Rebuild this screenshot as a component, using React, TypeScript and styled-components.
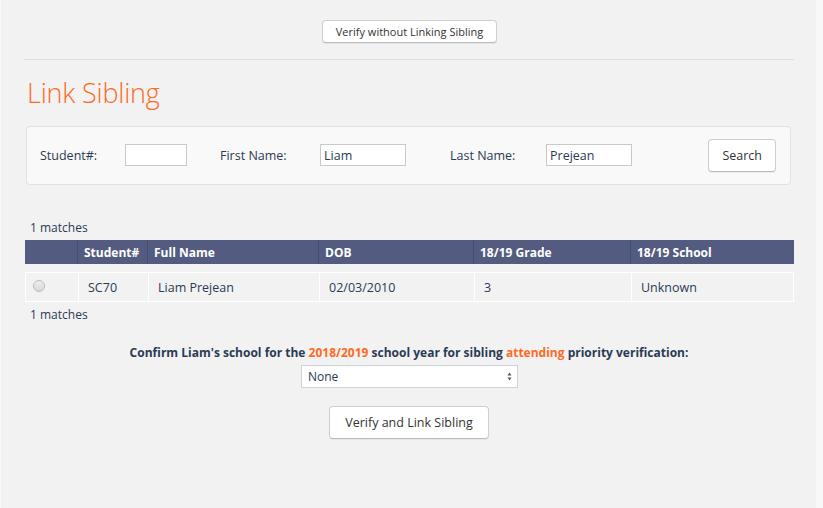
import React from 'react';
import styled, { createGlobalStyle } from 'styled-components';

const GlobalStyle = createGlobalStyle`
  html, body {
    margin: 0;
    padding: 0;
    background: #f8f8f8;
  }
  body {
    font-family: 'Open Sans', 'Liberation Sans', sans-serif;
    color: #2b3a55;
  }
`;

const Page = styled.div`
  margin-left: 1px;
  width: 815px;
  min-height: 508px;
  background: #f2f2f2;
  box-sizing: border-box;
  padding: 20px 22px 0 23px;
`;

const TopBar = styled.div`
  display: flex;
  justify-content: center;
  padding-bottom: 16px;
  border-bottom: 1px solid #dedede;
`;

const Button = styled.button<{ $size?: 'sm' | 'md' }>`
  font-family: 'Open Sans', 'Liberation Sans', sans-serif;
  background: #ffffff;
  color: #333333;
  border: 1px solid #cfcfcf;
  border-bottom-color: #bcbcbc;
  border-radius: 4px;
  box-shadow: 0 1px 1px rgba(0, 0, 0, 0.06);
  cursor: pointer;
  font-size: ${(p) => (p.$size === 'sm' ? '11px' : '12.5px')};
  height: ${(p) => (p.$size === 'sm' ? '23px' : '33px')};
  padding: ${(p) => (p.$size === 'sm' ? '0 13px' : '0 15px')};
  margin-left: ${(p) => (p.$size === 'sm' ? '1px' : '0')};
`;

const SearchButton = styled(Button)`
  font-size: 12.5px;
  padding: 0 13px;
  margin-right: 1px;
`;

const Title = styled.h1`
  margin: 16px 0 16px 3px;
  font-size: 27px;
  font-weight: 300;
  line-height: 34px;
  color: #ff6a1f;
  letter-spacing: -0.2px;
`;

const SearchPanel = styled.div`
  display: flex;
  align-items: center;
  margin-left: 2px;
  width: 765px;
  height: 59px;
  box-sizing: border-box;
  padding: 0 13px 1px 13px;
  background: #f9f9f9;
  border: 1px solid #e1e1e1;
  border-radius: 4px;
`;

const Label = styled.span<{ $w: number }>`
  width: ${(p) => p.$w}px;
  font-size: 12.5px;
  color: #2b3a55;
`;

const Input = styled.input<{ $w: number; $gap: number }>`
  width: ${(p) => p.$w}px;
  height: 22px;
  box-sizing: border-box;
  margin-right: ${(p) => p.$gap}px;
  border: 1px solid #c9c9c9;
  background: #ffffff;
  padding: 0 3px;
  font-family: 'Open Sans', 'Liberation Sans', sans-serif;
  font-size: 12.5px;
  color: #2b3a55;
  outline: none;
`;

const Spacer = styled.div`
  flex: 1;
`;

const Matches = styled.div<{ $top: number }>`
  margin: ${(p) => p.$top}px 0 0 6px;
  font-size: 12px;
  line-height: 16px;
  color: #2b3a55;
`;

const Table = styled.div`
  margin-top: 4px;
  width: 769px;
  margin-left: 1px;
`;

const columns = '52px 70px 171px 155px 157px 1fr';

const HeaderRow = styled.div`
  display: grid;
  grid-template-columns: ${columns};
  height: 24px;
  background: #535c80;
  margin-bottom: 8px;
`;

const HeaderCell = styled.div`
  display: flex;
  align-items: center;
  padding-left: 6px;
  font-size: 12px;
  font-weight: 700;
  color: #ffffff;
  border-left: 1px solid #474f71;
  &:first-child {
    border-left: none;
  }
`;

const DataRow = styled.div`
  display: grid;
  grid-template-columns: ${columns};
  height: 30px;
  box-sizing: border-box;
  border: 1px solid #ffffff;
`;

const DataCell = styled.div`
  display: flex;
  align-items: center;
  padding-left: 9px;
  font-size: 12.5px;
  color: #2b3a55;
  border-left: 1px solid #ffffff;
  &:first-child {
    border-left: none;
    padding-left: 7px;
  }
`;

const Radio = styled.span`
  width: 12px;
  height: 12px;
  border-radius: 50%;
  box-sizing: border-box;
  border: 1px solid #bbbbbb;
  background: linear-gradient(#efefef, #d9d9d9);
  margin-top: -2px;
`;

const Confirm = styled.div`
  display: flex;
  flex-direction: column;
  align-items: center;
  margin-top: 22px;
`;

const Question = styled.p`
  margin: 0 0 4px;
  font-size: 12px;
  font-weight: 700;
  line-height: 16px;
  color: #2b3a55;
`;

const Accent = styled.span`
  color: #ff6a1f;
`;

const SelectBox = styled.div`
  display: flex;
  align-items: center;
  justify-content: space-between;
  width: 217px;
  height: 23px;
  box-sizing: border-box;
  background: #ffffff;
  border: 1px solid #cdd3dc;
  padding: 0 5px 0 6px;
  font-size: 12px;
  color: #2b3a55;
  margin-bottom: 18px;
  margin-left: 1px;
`;

const Arrows = () => (
  <svg width="5" height="9" viewBox="0 0 5 9">
    <path d="M2.5 0.5 L4.5 3.5 H0.5 Z" fill="#555" />
    <path d="M2.5 8.5 L4.5 5.5 H0.5 Z" fill="#555" />
  </svg>
);

export default function App() {
  return (
    <>
      <GlobalStyle />
      <Page>
        <TopBar>
          <Button $size="sm">Verify without Linking Sibling</Button>
        </TopBar>
        <Title>Link Sibling</Title>
        <SearchPanel>
          <Label $w={85}>Student#:</Label>
          <Input $w={62} $gap={33} />
          <Label $w={100}>First Name:</Label>
          <Input $w={86} $gap={44} defaultValue="Liam" />
          <Label $w={96}>Last Name:</Label>
          <Input $w={86} $gap={0} defaultValue="Prejean" />
          <Spacer />
          <SearchButton>Search</SearchButton>
        </SearchPanel>
        <Matches $top={35}>1 matches</Matches>
        <Table>
          <HeaderRow>
            <HeaderCell />
            <HeaderCell>Student#</HeaderCell>
            <HeaderCell>Full Name</HeaderCell>
            <HeaderCell>DOB</HeaderCell>
            <HeaderCell>18/19 Grade</HeaderCell>
            <HeaderCell>18/19 School</HeaderCell>
          </HeaderRow>
          <DataRow>
            <DataCell>
              <Radio />
            </DataCell>
            <DataCell>SC70</DataCell>
            <DataCell>Liam Prejean</DataCell>
            <DataCell>02/03/2010</DataCell>
            <DataCell>3</DataCell>
            <DataCell>Unknown</DataCell>
          </DataRow>
        </Table>
        <Matches $top={5}>1 matches</Matches>
        <Confirm>
          <Question>
            Confirm Liam's school for the <Accent>2018/2019</Accent> school year for sibling{' '}
            <Accent>attending</Accent> priority verification:
          </Question>
          <SelectBox>
            <span>None</span>
            <Arrows />
          </SelectBox>
          <Button>Verify and Link Sibling</Button>
        </Confirm>
      </Page>
    </>
  );
}
